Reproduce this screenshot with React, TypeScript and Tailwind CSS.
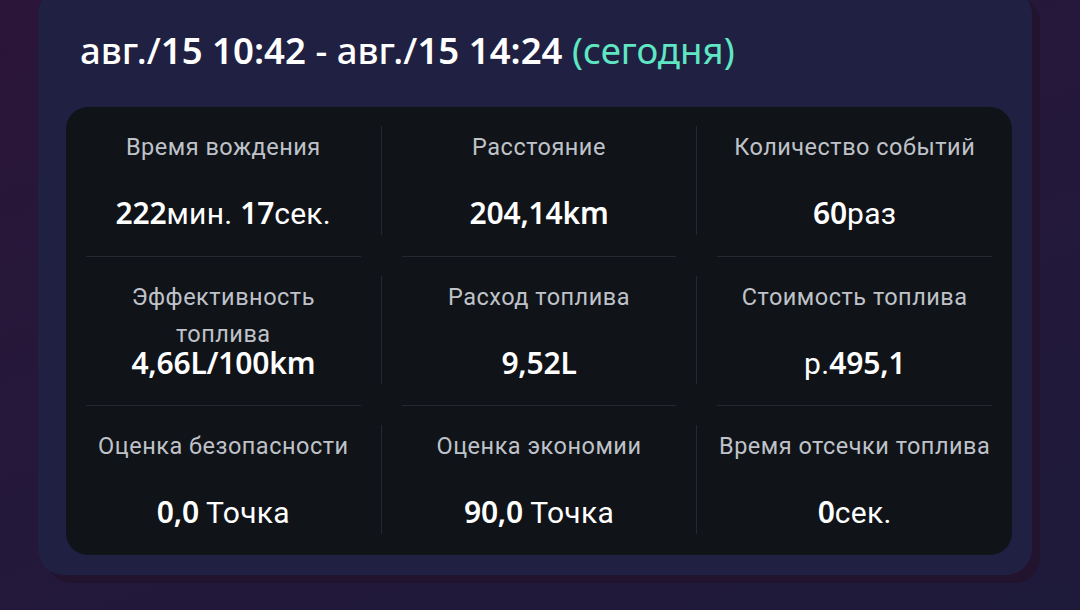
import React from "react";

type Part = { t: string; b?: boolean };
type Cell = { label: string; value: Part[] };

const rows: Cell[][] = [
  [
    { label: "Время вождения", value: [{ t: "222", b: true }, { t: "мин. " }, { t: "17", b: true }, { t: "сек." }] },
    { label: "Расстояние", value: [{ t: "204,14km", b: true }] },
    { label: "Количество событий", value: [{ t: "60", b: true }, { t: "раз" }] },
  ],
  [
    { label: "Эффективность топлива", value: [{ t: "4,66L/100km", b: true }] },
    { label: "Расход топлива", value: [{ t: "9,52L", b: true }] },
    { label: "Стоимость топлива", value: [{ t: "р." }, { t: "495,1", b: true }] },
  ],
  [
    { label: "Оценка безопасности", value: [{ t: "0,0", b: true }, { t: " Точка" }] },
    { label: "Оценка экономии", value: [{ t: "90,0", b: true }, { t: " Точка" }] },
    { label: "Время отсечки топлива", value: [{ t: "0", b: true }, { t: "сек." }] },
  ],
];

function CellView({ c }: { c: Cell }) {
  return (
    <div className="flex-1 flex flex-col items-center pt-[22px]">
      <div className="h-[37px] w-[277px] text-center text-[23.5px] leading-[37px] tracking-[0.5px] text-[#bfc2c8] font-['Roboto',sans-serif]">
        {c.label}
      </div>
      <div className="mt-[28px] h-[38px] leading-[38px] text-[30px] tracking-[0.3px] text-white font-['Roboto',sans-serif] whitespace-pre">
        {c.value.map((p, i) => (
          <span key={i} className={p.b ? "font-semibold font-['Noto_Sans',sans-serif] tracking-[-0.2px]" : "font-normal"}>
            {p.t}
          </span>
        ))}
      </div>
    </div>
  );
}

export default function App() {
  return (
    <div className="w-[1080px] h-[610px] overflow-hidden bg-[linear-gradient(160deg,#2b1538_0%,#24183a_50%,#1e1a3a_100%)]">
      <div className="ml-[38px] -mt-[12px] w-[994px] h-[587px] rounded-[26px] bg-[#202142] shadow-[8px_8px_0_#22142f] pt-[12px]">
        <div className="h-[107px] pl-[42px] pt-[25px] text-[36.6px] leading-[50px] text-white font-['Noto_Sans',sans-serif] whitespace-pre">
          <span className="font-medium">авг./</span>
          <span className="font-semibold">15 10:42</span>
          <span className="font-medium"> - авг./</span>
          <span className="font-semibold">15 14:24</span>
          <span className="font-normal text-[#5fe6c3]"> (сегодня)</span>
        </div>
        <div className="ml-[28px] w-[946px] h-[448px] rounded-[22px] bg-[#101318] flex flex-col">
          {rows.map((r, ri) => (
            <React.Fragment key={ri}>
              {ri > 0 && (
                <div className="flex h-px">
                  <div className="flex-1 mx-5 bg-[#242831]" />
                  <div className="w-px" />
                  <div className="flex-1 mx-5 bg-[#242831]" />
                  <div className="w-px" />
                  <div className="flex-1 mx-5 bg-[#242831]" />
                </div>
              )}
              <div className="flex h-[149px]">
                <CellView c={r[0]} />
                <div className="w-px mt-[19px] mb-[21px] bg-[#242831]" />
                <CellView c={r[1]} />
                <div className="w-px mt-[19px] mb-[21px] bg-[#242831]" />
                <CellView c={r[2]} />
              </div>
            </React.Fragment>
          ))}
        </div>
      </div>
    </div>
  );
}
